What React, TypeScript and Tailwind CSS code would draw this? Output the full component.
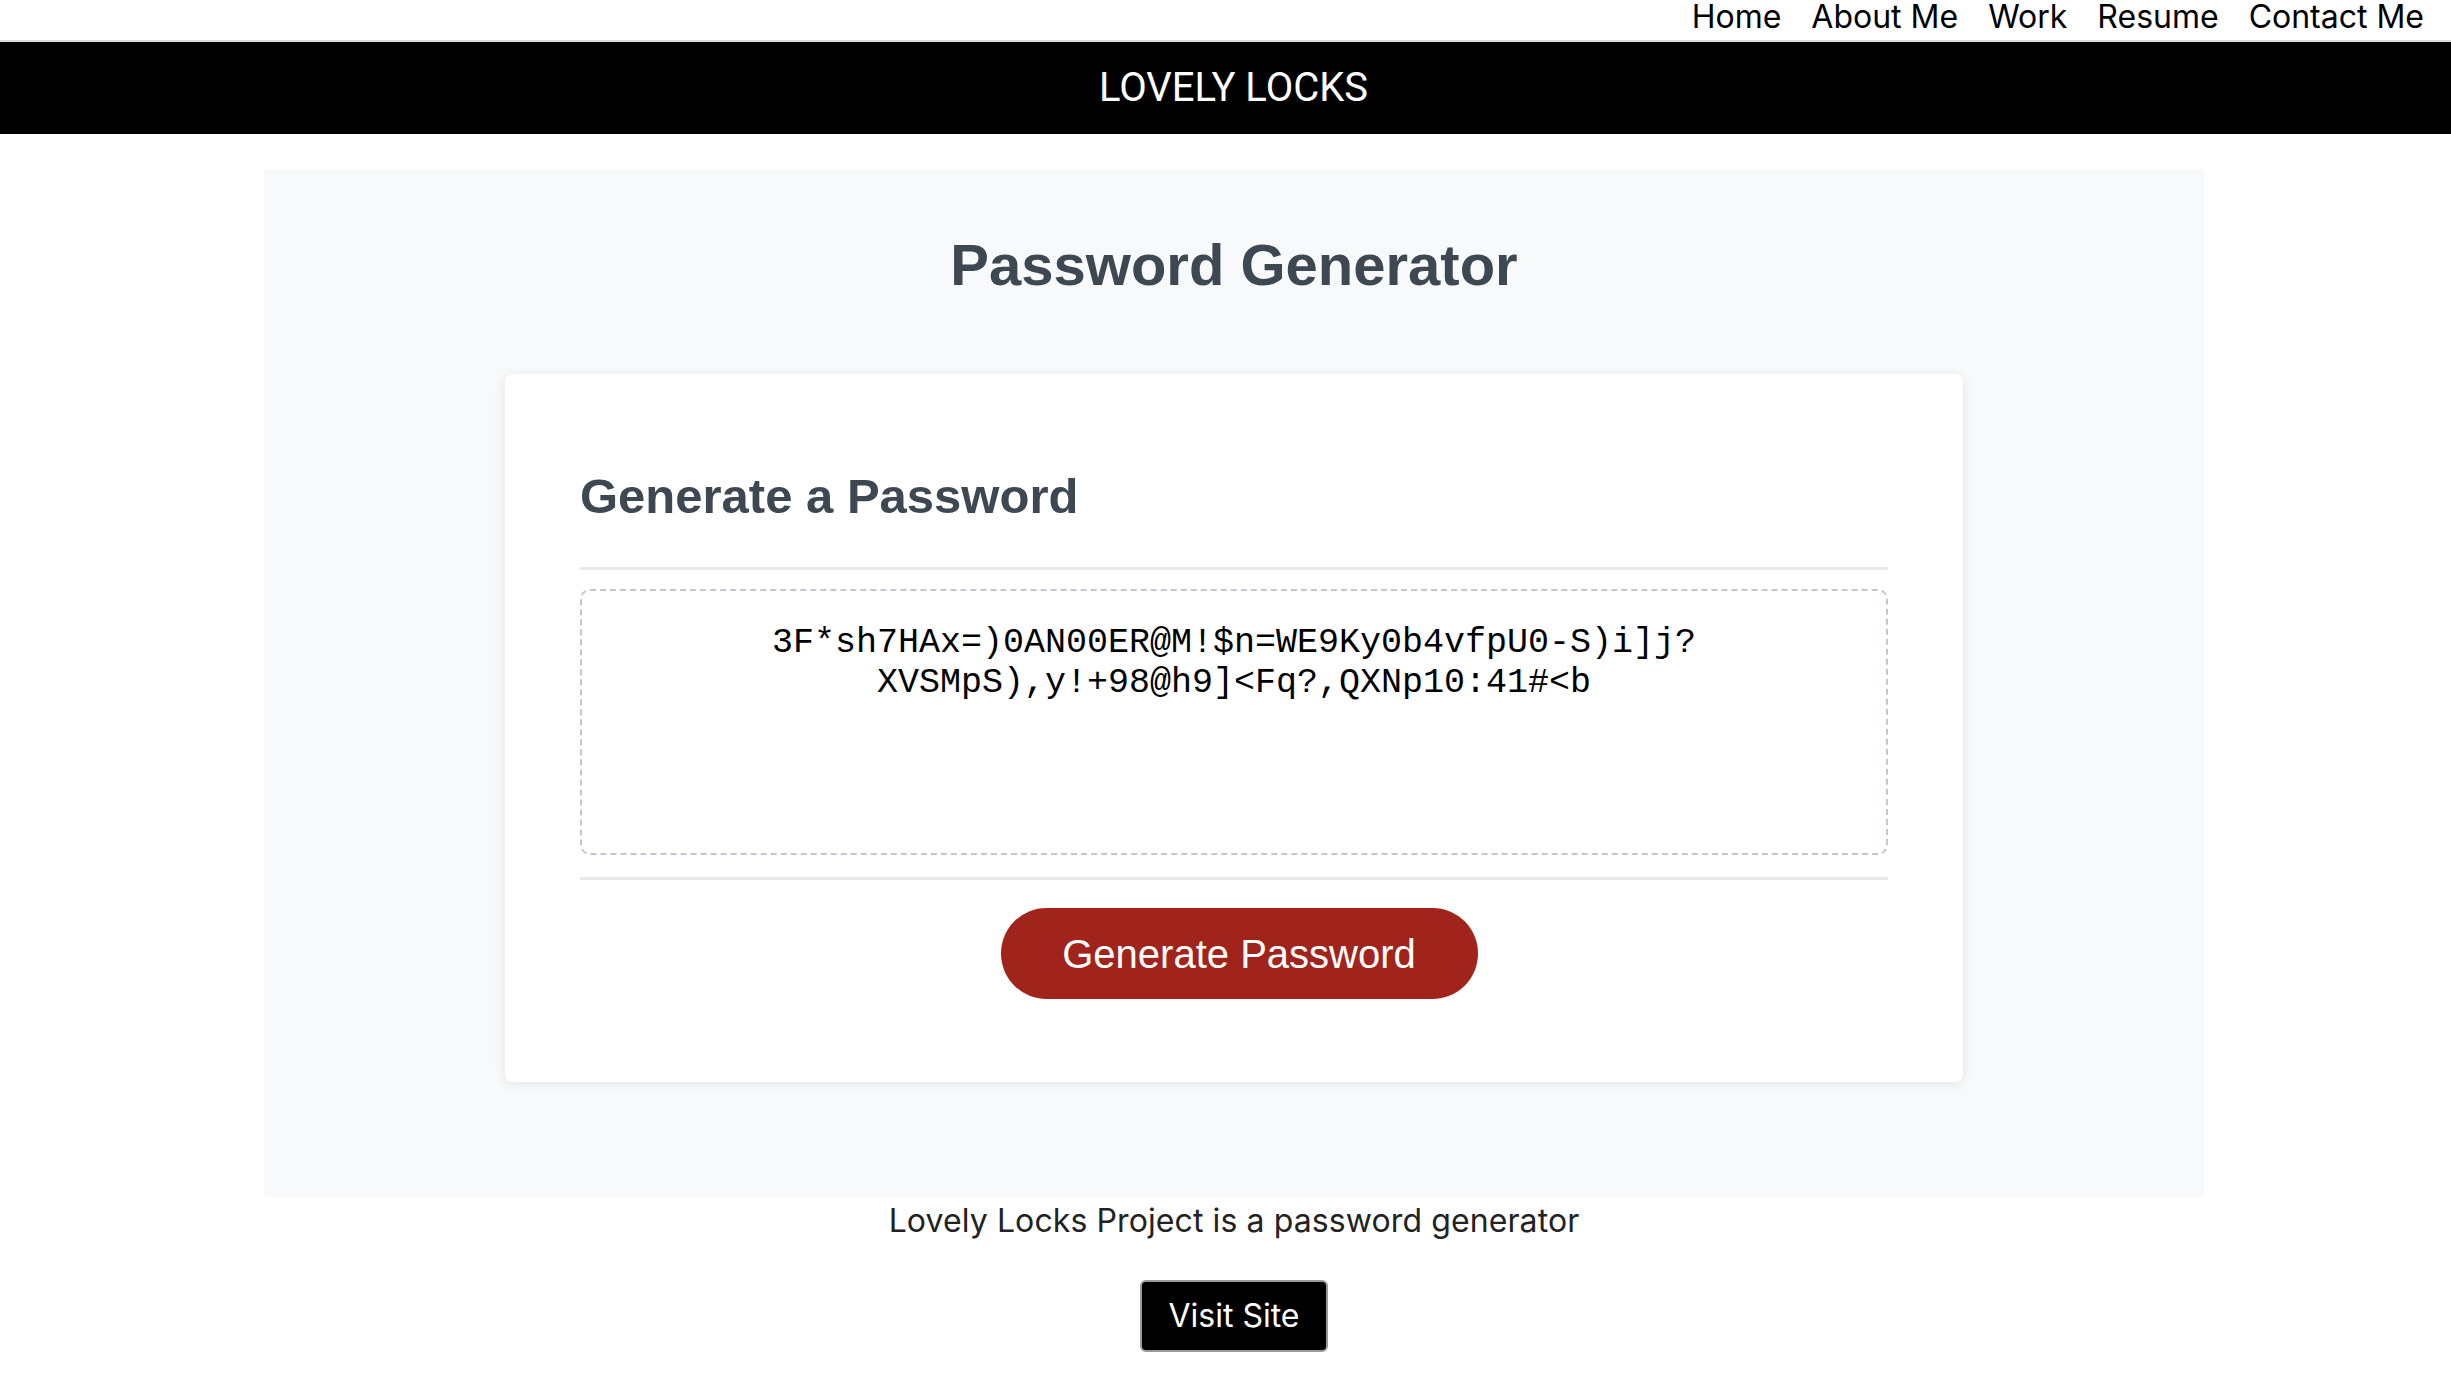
export default function App() {
  const navLinks = ["Home", "About Me", "Work", "Resume", "Contact Me"];

  return (
    <div className="min-h-screen bg-white">
      {/* Top nav */}
      <nav className="h-[42px] border-b-2 border-[#dcdcdc] flex justify-end items-start gap-[30px] pr-[27px] font-['Inter',sans-serif] text-[32px] leading-[32px] text-black">
        {navLinks.map((link) => (
          <a key={link} href="#" className="pt-[1px]">
            {link}
          </a>
        ))}
      </nav>

      {/* Header */}
      <header className="h-[92px] bg-black flex items-center justify-center pl-[16px]">
        <h1 className="font-['Roboto',sans-serif] text-[40px] text-white">LOVELY LOCKS</h1>
      </header>

      <div className="pl-[17px]">
        {/* Project panel */}
        <section className="mt-[35px] mx-auto w-[1940px] bg-[#f8f9fa] rounded-[4px] pt-[61px] pb-[115px] font-['Liberation_Sans',Arial,sans-serif]">
          <h2 className="text-center text-[58px] leading-[70px] font-bold text-[#3e4852]">Password Generator</h2>

          <div className="mt-[74px] mx-auto w-[1458px] bg-white rounded-[8px] shadow-[0_2px_12px_rgba(0,0,0,0.09)] px-[75px] pt-[93px] pb-[83px]">
            <h3 className="text-[49px] leading-[59px] font-bold text-[#3e4852]">Generate a Password</h3>

            <div className="mt-[41px] h-[3px] bg-[#e9e9e9]"></div>

            <div className="mt-[19px] h-[266px] border-2 border-dashed border-[#c2c7cf] rounded-[10px] pt-[32px] text-center font-['Liberation_Mono','Courier_New',monospace] text-[35px] leading-[40px] text-black">
              3F*sh7HAx=)0AN00ER@M!$n=WE9Ky0b4vfpU0-S)i]j?
              <br />
              XVSMpS),y!+98@h9]&lt;Fq?,QXNp10:41#&lt;b
            </div>

            <div className="mt-[22px] h-[3px] bg-[#e9e9e9]"></div>

            <div className="mt-[28px] pl-[10px] flex justify-center">
              <button className="w-[477px] h-[91px] rounded-full bg-[#a1241c] text-white text-[40px]">
                Generate Password
              </button>
            </div>
          </div>
        </section>

        {/* Description */}
        <div className="flex flex-col items-center font-['Inter',sans-serif] text-[#222]">
          <p className="mt-[4px] text-[32px] leading-[40px] tracking-[0.1px]">Lovely Locks Project is a password generator</p>
          <a
            href="#"
            className="mt-[39px] h-[72px] px-[26px] flex items-center bg-black text-white text-[32px] rounded-[6px] border-2 border-[#9a9a9a]"
          >
            Visit Site
          </a>
        </div>
      </div>
    </div>
  );
}
